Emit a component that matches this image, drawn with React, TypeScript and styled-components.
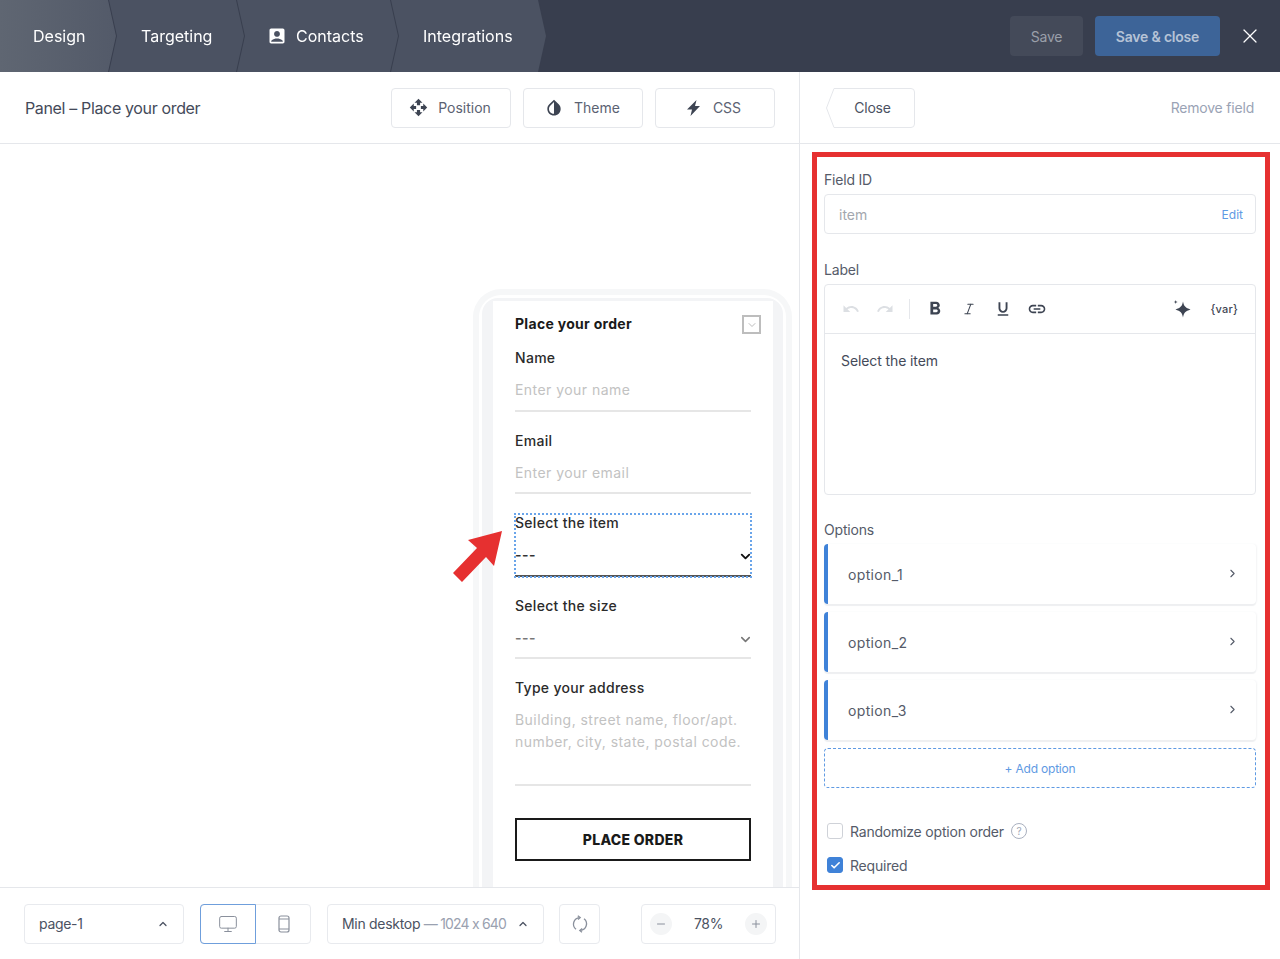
import React from "react";
import styled, { createGlobalStyle } from "styled-components";
import { ChevronRight, ChevronUp, ChevronDown, Minus, Plus, X, Monitor, Check, Italic } from "lucide-react";
import {
  MdAccountBox,
  MdInvertColors,
  MdOpenWith,
  MdUndo,
  MdRedo,
  MdFormatBold,
  MdFormatUnderlined,
  MdLink,
} from "react-icons/md";

const GlobalStyle = createGlobalStyle`
  html, body { margin: 0; padding: 0; background: #fff; }
  body { font-family: "Inter", "Liberation Sans", sans-serif; color: #4b5262; }
  * { box-sizing: border-box; }
`;

const Page = styled.div`
  position: relative;
  width: 1280px;
  height: 959px;
  overflow: hidden;
  display: flex;
  flex-direction: column;
`;

const Header = styled.header`
  height: 72px;
  flex: none;
  display: flex;
  align-items: center;
  background: #383e4e;
  padding-right: 18px;
`;

const Tabs = styled.nav`
  display: flex;
  height: 100%;
  margin-right: auto;
`;

const TabWrap = styled.div<{ $w: number; $z: number }>`
  width: ${(p) => p.$w}px;
  height: 100%;
  margin-right: -8px;
  position: relative;
  z-index: ${(p) => p.$z};
  filter: drop-shadow(1px 0 0 #383e4e);
`;

const TabFace = styled.div<{ $active?: boolean }>`
  height: 100%;
  display: flex;
  align-items: center;
  gap: 9px;
  padding-left: 33px;
  color: #fff;
  font-size: 16px;
  clip-path: polygon(0 0, calc(100% - 8px) 0, 100% 50%, calc(100% - 8px) 100%, 0 100%);
  background: ${(p) => (p.$active ? "linear-gradient(90deg, #5f6672, #535a69)" : "#4b5262")};
  svg { margin-left: -2px; }
`;

const HeaderButton = styled.button<{ $primary?: boolean }>`
  height: 40px;
  border: 0;
  border-radius: 4px;
  font-family: inherit;
  font-size: 14px;
  letter-spacing: -0.2px;
  font-weight: ${(p) => (p.$primary ? 600 : 400)};
  width: ${(p) => (p.$primary ? 125 : 73)}px;
  margin-right: 12px;
  color: ${(p) => (p.$primary ? "#b6c3d6" : "#9a9fa9")};
  background: ${(p) => (p.$primary ? "#3d6498" : "#444a59")};
`;

const CloseIcon = styled(X)`
  margin-left: 6px;
  color: #fff;
`;

const Body = styled.main`
  flex: 1;
  display: flex;
  min-height: 0;
`;

const LeftColumn = styled.section`
  width: 800px;
  display: flex;
  flex-direction: column;
  border-right: 1px solid #e5e7eb;
`;

const TopBar = styled.div`
  height: 72px;
  flex: none;
  display: flex;
  align-items: center;
  justify-content: space-between;
  border-bottom: 1px solid #e5e7eb;
  padding: 0 24px 0 25px;
`;

const PanelTitle = styled.div`
  font-size: 16px;
  letter-spacing: -0.35px;
  color: #444a59;
  margin-right: auto;
`;

const ToolButton = styled.button<{ $gap: number }>`
  width: 120px;
  height: 40px;
  margin-left: 12px;
  padding: 0 2px 0 0;
  display: flex;
  align-items: center;
  justify-content: center;
  gap: ${(p) => p.$gap}px;
  background: #fff;
  border: 1px solid #e5e7eb;
  border-radius: 4px;
  font-family: inherit;
  font-size: 14px;
  color: #5b6272;
  svg { color: #3d4452; flex: none; }
`;

const Canvas = styled.div`
  flex: 1;
  min-height: 0;
  overflow: hidden;
  display: flex;
  justify-content: flex-end;
  padding: 145px 7px 0 0;
`;

const DeviceFrame = styled.div`
  width: 319px;
  height: 640px;
  border: 6px solid #f6f7f8;
  border-bottom: 0;
  border-radius: 28px 28px 0 0;
  padding: 3px 3px 0;
  background: #fff;
`;

const DeviceInner = styled.div`
  height: 100%;
  background: #f3f4f6;
  padding: 3px 10px 0 11px;
  border-radius: 16px 16px 0 0;
`;

const FormCard = styled.div`
  position: relative;
  height: 100%;
  background: #fff;
  padding: 14px 22px 0;
  display: flex;
  flex-direction: column;
  color: #222;
`;

const FormTitle = styled.div`
  font-size: 14px;
  font-weight: 700;
  line-height: 18px;
  letter-spacing: 0.3px;
  color: #1a1a1a;
  margin-bottom: 16px;
`;

const Collapse = styled.div`
  position: absolute;
  top: 14px;
  right: 12px;
  width: 19px;
  height: 19px;
  border: 2px solid #bdbdbd;
  display: flex;
  align-items: center;
  justify-content: center;
  color: #bdbdbd;
`;

const FormField = styled.div<{ $h?: number; $selected?: boolean }>`
  position: relative;
  height: ${(p) => p.$h ?? 62.6}px;
  margin-bottom: 20px;
  flex: none;
  display: flex;
  flex-direction: column;
  border-bottom: 2px solid ${(p) => (p.$selected ? "#555" : "#e6e6e6")};
  outline: ${(p) => (p.$selected ? "2px dotted #6aa5ea" : "none")};
  outline-offset: -1px;
`;

const FieldLabel = styled.div`
  font-size: 14px;
  font-weight: 500;
  line-height: 18px;
  letter-spacing: 0.3px;
  color: #2b2b2b;
  margin-bottom: 12px;
`;

const Placeholder = styled.div`
  font-size: 14px;
  line-height: 22px;
  letter-spacing: 0.45px;
  color: #c2c2c2;
`;

const SelectValue = styled.div<{ $dark?: boolean }>`
  display: flex;
  justify-content: space-between;
  align-items: center;
  font-size: 14px;
  font-weight: 600;
  line-height: 22px;
  letter-spacing: 0.5px;
  color: ${(p) => (p.$dark ? "#333" : "#777")};
  svg { color: ${(p) => (p.$dark ? "#111" : "#777")}; margin: 3px -2px 0 0; }
`;

const SubmitButton = styled.button`
  height: 43px;
  margin-top: 12px;
  flex: none;
  background: #fff;
  border: 2px solid #1a1a1a;
  font-family: inherit;
  font-size: 14px;
  font-weight: 800;
  letter-spacing: 0.3px;
  color: #1a1a1a;
`;

const BottomBar = styled.div`
  height: 72px;
  flex: none;
  display: flex;
  align-items: center;
  gap: 16px;
  border-top: 1px solid #e5e7eb;
  padding: 0 24px;
  background: #fff;
`;

const FooterBox = styled.div<{ $w: number; $left?: number }>`
  width: ${(p) => p.$w}px;
  height: 40px;
  flex: none;
  margin-left: ${(p) => p.$left ?? 0}px;
  display: flex;
  align-items: center;
  border: 1px solid #e8eaee;
  border-radius: 4px;
  font-size: 14px;
  letter-spacing: -0.3px;
  color: #4b5262;
`;

const SelectBox = styled(FooterBox)`
  justify-content: space-between;
  padding: 0 14px;
  svg { flex: none; }
`;

const Muted = styled.span`
  color: #9aa1b0;
  letter-spacing: -0.8px;
`;

const DeviceButton = styled.div<{ $active?: boolean }>`
  width: ${(p) => (p.$active ? 56 : 55)}px;
  height: 40px;
  margin: ${(p) => (p.$active ? "0 0 0 -1px" : "0")};
  flex: none;
  display: flex;
  align-items: center;
  justify-content: center;
  color: #8a909c;
  border-radius: 4px 0 0 4px;
  border: ${(p) => (p.$active ? "1px solid #6f9fdc" : "0")};
`;

const CenterBox = styled(FooterBox)`
  justify-content: center;
  color: #8a909c;
`;

const ZoomBox = styled(FooterBox)`
  justify-content: space-between;
  padding: 0 8px;
`;

const ZoomStep = styled.div`
  width: 22px;
  height: 22px;
  border-radius: 50%;
  background: #f4f5f6;
  display: flex;
  align-items: center;
  justify-content: center;
  color: #8a909c;
`;

const SidePanel = styled.aside`
  width: 480px;
  display: flex;
  flex-direction: column;
`;

const SideTop = styled(TopBar)`
  padding: 0 26px 0 26px;
`;

const BackButton = styled.button`
  width: 89px;
  height: 40px;
  border: 0;
  padding: 0 0 0 4px;
  font-family: inherit;
  font-size: 14px;
  letter-spacing: -0.2px;
  color: #4b5262;
  background: transparent;
  position: relative;
  svg { position: absolute; inset: 0; }
  span { position: relative; }
`;

const RemoveLink = styled.div`
  font-size: 14px;
  letter-spacing: -0.2px;
  color: #9aa3b5;
`;

const SideBody = styled.div`
  padding: 25px 24px 0;
  display: flex;
  flex-direction: column;
`;

const SideLabel = styled.div<{ $gap?: number }>`
  font-size: 14px;
  line-height: 20px;
  padding-top: 2px;
  margin-top: -1px;
  letter-spacing: -0.2px;
  color: #555b69;
  margin-bottom: ${(p) => (p.$gap ?? 5) - 1}px;
`;

const IdInput = styled.div`
  height: 40px;
  display: flex;
  align-items: center;
  justify-content: space-between;
  padding: 0 12px 0 14px;
  border: 1px solid #e5e7eb;
  border-radius: 4px;
  margin-bottom: 25px;
  font-size: 14px;
  color: #a3a7ae;
`;

const EditLink = styled.span`
  font-size: 12px;
  color: #5f9ae3;
`;

const Editor = styled.div`
  height: 211px;
  border: 1px solid #e5e7eb;
  border-radius: 4px;
  margin-bottom: 24px;
`;

const EditorToolbar = styled.div`
  height: 49px;
  display: flex;
  align-items: center;
  padding: 0 16px 0 9px;
  border-bottom: 1px solid #e5e7eb;
`;

const ToolIcon = styled.span<{ $off?: boolean }>`
  width: 34px;
  display: flex;
  justify-content: center;
  color: ${(p) => (p.$off ? "#dcdfe3" : "#3d4452")};
`;

const ToolDivider = styled.div`
  width: 1px;
  height: 20px;
  background: #e5e7eb;
  margin: 0 8px 0 7px;
`;

const ToolSpacer = styled.div`
  flex: 1;
`;

const VarTag = styled.span`
  font-size: 11px;
  font-weight: 500;
  letter-spacing: 0.2px;
  color: #3d4452;
  margin: 0 1px 0 20px;
`;

const EditorText = styled.div`
  padding: 17px 16px;
  font-size: 14px;
  line-height: 20px;
  letter-spacing: -0.1px;
  color: #444a59;
`;

const OptionRow = styled.div`
  height: 60px;
  margin-bottom: 8px;
  display: flex;
  align-items: center;
  justify-content: space-between;
  padding: 1px 17px 0 20px;
  background: #fff;
  border-left: 4px solid #3f82d8;
  border-radius: 4px;
  box-shadow: 0 2px 1px #eeeff1, 1px 0 2px #f4f5f6;
  font-size: 14px;
  letter-spacing: 0.35px;
  color: #555b69;
  svg { color: #555b69; margin-top: -3px; }
`;

const AddOption = styled.div`
  height: 40px;
  display: flex;
  align-items: center;
  justify-content: center;
  border: 1px dashed #5f9ae3;
  border-radius: 4px;
  margin-bottom: 33px;
  font-size: 12px;
  letter-spacing: -0.2px;
  color: #5f9ae3;
`;

const CheckRow = styled.div`
  height: 20px;
  margin: 0 0 14px 3px;
  display: flex;
  align-items: center;
  gap: 7px;
  font-size: 14px;
  letter-spacing: -0.2px;
  color: #555b69;
`;

const CheckBox = styled.span<{ $on?: boolean }>`
  width: 16px;
  height: 16px;
  border-radius: 3px;
  display: flex;
  align-items: center;
  justify-content: center;
  border: 1px solid ${(p) => (p.$on ? "#3f82d8" : "#cfd2d8")};
  background: ${(p) => (p.$on ? "#3f82d8" : "#fff")};
  color: #fff;
`;

const HelpDot = styled.span`
  width: 16px;
  height: 16px;
  border: 1px solid #a9b0bf;
  border-radius: 50%;
  display: flex;
  align-items: center;
  justify-content: center;
  font-size: 10px;
  color: #a0a7b6;
`;

// annotation drawn on top of the screenshot
const RedFrame = styled.div`
  position: absolute;
  left: 812px;
  top: 152px;
  width: 458px;
  height: 738px;
  border: 5px solid #e63030;
  pointer-events: none;
`;

const RedArrow = styled.svg`
  position: absolute;
  left: 452px;
  top: 530px;
  width: 52px;
  height: 54px;
`;

function BoltIcon() {
  return (
    <svg width="13" height="16" viewBox="0 0 13 16" fill="currentColor">
      <path d="M9.500 0 0 9.500h5L3.500 16 13 6H8L9.500 0z" />
    </svg>
  );
}

function MobileIcon() {
  return (
    <svg width="14" height="18" viewBox="0 0 14 18" fill="none" stroke="currentColor" strokeWidth="1.2">
      <rect x="2" y="1" width="10" height="16" rx="2" />
      <path d="M2 4h10M2 14h10" />
    </svg>
  );
}

function RotateIcon() {
  return (
    <svg width="18" height="18" viewBox="0 0 18 18" fill="none" stroke="currentColor" strokeWidth="1.3">
      <path d="M5 14.200A6.500 6.500 0 0 1 8.500 2.600" />
      <path d="M13 3.800A6.500 6.500 0 0 1 9.500 15.400" />
      <path d="M6.800 0.800 9.200 2.600 7 4.600" />
      <path d="M11.200 13.400 8.800 15.400 11 17.200" />
    </svg>
  );
}

function SparkleIcon() {
  return (
    <svg width="18" height="18" viewBox="0 0 18 18" fill="#3d4452">
      <path d="M10 1.500c.8 4.700 2.500 6.300 7.500 8-5 1.700-6.700 3.300-7.500 8-.8-4.700-2.500-6.300-7.500-8 5-1.700 6.700-3.300 7.500-8z" />
      <path d="M2.700 0c.2 1.300.7 1.800 2 2-1.300.2-1.800.7-2 2-.2-1.300-.7-1.800-2-2 1.300-.2 1.800-.7 2-2z" />
    </svg>
  );
}

const tabs = [
  { label: "Design", w: 116, active: true },
  { label: "Targeting", w: 136 },
  { label: "Contacts", w: 162, icon: true },
  { label: "Integrations", w: 156 },
];

const options = ["option_1", "option_2", "option_3"];

export default function App() {
  return (
    <Page>
      <GlobalStyle />
      <Header>
        <Tabs>
          {tabs.map((tab, index) => (
            <TabWrap key={tab.label} $w={tab.w} $z={tabs.length - index}>
              <TabFace $active={tab.active}>
                {tab.icon && <MdAccountBox size={20} />}
                {tab.label}
              </TabFace>
            </TabWrap>
          ))}
        </Tabs>
        <HeaderButton>Save</HeaderButton>
        <HeaderButton $primary>Save &amp; close</HeaderButton>
        <CloseIcon size={24} strokeWidth={1.2} />
      </Header>

      <Body>
        <LeftColumn>
          <TopBar>
            <PanelTitle>Panel – Place your order</PanelTitle>
            <ToolButton $gap={10}>
              <MdOpenWith size={19} />
              Position
            </ToolButton>
            <ToolButton $gap={10}>
              <MdInvertColors size={20} />
              Theme
            </ToolButton>
            <ToolButton $gap={13}>
              <BoltIcon />
              CSS
            </ToolButton>
          </TopBar>

          <Canvas>
            <DeviceFrame>
              <DeviceInner>
                <FormCard>
                  <FormTitle>Place your order</FormTitle>
                  <Collapse>
                    <ChevronDown size={12} />
                  </Collapse>
                  <FormField>
                    <FieldLabel>Name</FieldLabel>
                    <Placeholder>Enter your name</Placeholder>
                  </FormField>
                  <FormField>
                    <FieldLabel>Email</FieldLabel>
                    <Placeholder>Enter your email</Placeholder>
                  </FormField>
                  <FormField $selected>
                    <FieldLabel>Select the item</FieldLabel>
                    <SelectValue $dark>
                      ---
                      <ChevronDown size={15} strokeWidth={3} />
                    </SelectValue>
                  </FormField>
                  <FormField>
                    <FieldLabel>Select the size</FieldLabel>
                    <SelectValue>
                      ---
                      <ChevronDown size={15} strokeWidth={2.5} />
                    </SelectValue>
                  </FormField>
                  <FormField $h={106.6}>
                    <FieldLabel>Type your address</FieldLabel>
                    <Placeholder>
                      Building, street name, floor/apt.
                      <br />
                      number, city, state, postal code.
                    </Placeholder>
                  </FormField>
                  <SubmitButton>PLACE ORDER</SubmitButton>
                </FormCard>
              </DeviceInner>
            </DeviceFrame>
          </Canvas>

          <BottomBar>
            <SelectBox $w={160}>
              page-1
              <ChevronUp size={12} strokeWidth={2.5} />
            </SelectBox>
            <FooterBox $w={111}>
              <DeviceButton $active>
                <Monitor size={20} strokeWidth={1.2} />
              </DeviceButton>
              <DeviceButton>
                <MobileIcon />
              </DeviceButton>
            </FooterBox>
            <SelectBox $w={217}>
              <span>
                Min desktop <Muted>— 1024 x 640</Muted>
              </span>
              <ChevronUp size={12} strokeWidth={2.5} />
            </SelectBox>
            <CenterBox $w={41} $left={-1}>
              <RotateIcon />
            </CenterBox>
            <ZoomBox $w={135} $left={25}>
              <ZoomStep>
                <Minus size={12} />
              </ZoomStep>
              78%
              <ZoomStep>
                <Plus size={12} />
              </ZoomStep>
            </ZoomBox>
          </BottomBar>
        </LeftColumn>

        <SidePanel>
          <SideTop>
            <BackButton>
              <svg width="89" height="40" viewBox="0 0 89 40" fill="none" stroke="#e5e7eb">
                <path d="M8 .5h77a3.500 3.500 0 0 1 3.500 3.500v32a3.500 3.500 0 0 1-3.500 3.500H8L.5 20z" />
              </svg>
              <span>Close</span>
            </BackButton>
            <RemoveLink>Remove field</RemoveLink>
          </SideTop>

          <SideBody>
            <SideLabel>Field ID</SideLabel>
            <IdInput>
              item
              <EditLink>Edit</EditLink>
            </IdInput>

            <SideLabel>Label</SideLabel>
            <Editor>
              <EditorToolbar>
                <ToolIcon $off>
                  <MdUndo size={18} />
                </ToolIcon>
                <ToolIcon $off>
                  <MdRedo size={18} />
                </ToolIcon>
                <ToolDivider />
                <ToolIcon>
                  <MdFormatBold size={22} />
                </ToolIcon>
                <ToolIcon>
                  <Italic size={14} strokeWidth={1.8} />
                </ToolIcon>
                <ToolIcon>
                  <MdFormatUnderlined size={18} />
                </ToolIcon>
                <ToolIcon>
                  <MdLink size={20} />
                </ToolIcon>
                <ToolSpacer />
                <SparkleIcon />
                <VarTag>{"{var}"}</VarTag>
              </EditorToolbar>
              <EditorText>Select the item</EditorText>
            </Editor>

            <SideLabel $gap={5}>Options</SideLabel>
            {options.map((option) => (
              <OptionRow key={option}>
                {option}
                <ChevronRight size={13} />
              </OptionRow>
            ))}
            <AddOption>+ Add option</AddOption>

            <CheckRow>
              <CheckBox />
              Randomize option order
              <HelpDot>?</HelpDot>
            </CheckRow>
            <CheckRow>
              <CheckBox $on>
                <Check size={11} strokeWidth={3.5} />
              </CheckBox>
              Required
            </CheckRow>
          </SideBody>
        </SidePanel>
      </Body>

      <RedFrame />
      <RedArrow viewBox="0 0 52 54">
        <path d="M50 1 42 36 34 27 10 52 1 43 25 18 16 10z" fill="#e63030" />
      </RedArrow>
    </Page>
  );
}
